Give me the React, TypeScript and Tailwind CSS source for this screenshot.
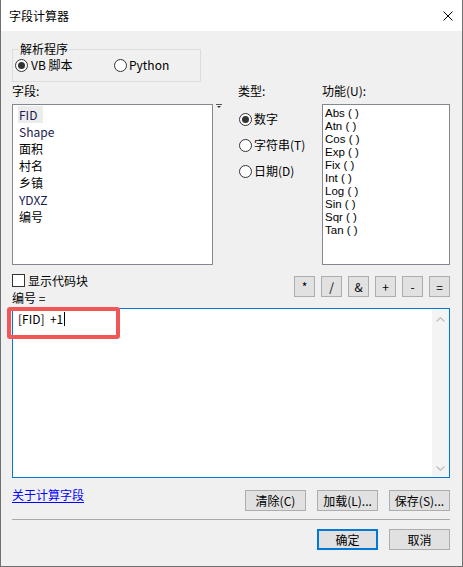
import React from "react";

function Radio({ checked }: { checked?: boolean }) {
  return (
    <span className="w-[13px] h-[13px] rounded-full border border-[#333333] bg-white flex items-center justify-center shrink-0">
      {checked && <span className="w-[7px] h-[7px] rounded-full bg-[#333333]" />}
    </span>
  );
}

function Btn({ children, primary, w = "w-[61px]" }: { children: React.ReactNode; primary?: boolean; w?: string }) {
  return (
    <div
      className={
        "h-[21px] flex items-center justify-center bg-[#e1e1e1] text-black " +
        w +
        " " +
        (primary ? "border-2 border-[#0078d7]" : "border border-[#adadad]")
      }
    >
      {children}
    </div>
  );
}

function OpBtn({ children }: { children: React.ReactNode }) {
  return (
    <div className="w-[21px] h-[21px] flex items-center justify-center bg-[#e1e1e1] border border-[#adadad] text-black">
      {children}
    </div>
  );
}

export default function App() {
  const fields = ["FID", "Shape", "面积", "村名", "乡镇", "YDXZ", "编号"];
  const funcs = ["Abs", "Atn", "Cos", "Exp", "Fix", "Int", "Log", "Sin", "Sqr", "Tan"];
  return (
    <div className="relative w-[463px] h-[567px] flex flex-col border-x border-b border-[#707070] bg-[#f0f0f0] text-[12px] leading-[16px] text-black font-['Noto_Sans_CJK_SC',sans-serif] overflow-hidden">
      {/* title bar */}
      <div className="h-[31px] shrink-0 bg-white flex items-center justify-between pl-[8px] pr-[9px]">
        <span>字段计算器</span>
        <svg width="10" height="10" viewBox="0 0 10 10" className="block">
          <path d="M0.5 0.5 L9.5 9.5 M9.5 0.5 L0.5 9.5" stroke="#000" strokeWidth="1" />
        </svg>
      </div>

      {/* body */}
      <div className="flex flex-col pl-[11px] pr-[12px]">
        {/* parser group */}
        <div className="relative mt-[18px] w-[189px] h-[33px] border border-[#dcdcdc] pl-[2px] pt-[7px]">
          <span className="absolute -top-[9px] left-[6px] px-[1px] bg-[#f0f0f0]">解析程序</span>
          <div className="flex items-center">
            <div className="w-[99px] flex items-center gap-[3px]">
              <Radio checked />
              <span>VB 脚本</span>
            </div>
            <div className="flex items-center gap-[2px]">
              <Radio />
              <span>Python</span>
            </div>
          </div>
        </div>

        {/* lists row */}
        <div className="flex mt-[1px]">
          <div className="w-[201px] flex flex-col">
            <span className="h-[16px]">字段:</span>
            <div className="mt-[5px] h-[161px] border border-[#828790] bg-white pl-[5px] pt-[1px] flex flex-col items-start">
              {fields.map((f, i) => (
                <span
                  key={f}
                  className={
                    "h-[17px] leading-[17px] px-[1px] " +
                    (i === 0 ? "bg-[#ececec] w-[25px]" : "") +
                    (/^[A-Za-z]/.test(f) ? " text-[#1a1a50]" : "")
                  }
                >
                  {f}
                </span>
              ))}
            </div>
          </div>
          <div className="ml-[3px] mt-[21px] w-[6px]">
            <svg width="6" height="5" viewBox="0 0 6 5" className="block">
              <path d="M0 0.5 H6" stroke="#555" strokeWidth="1" />
              <path d="M1 2 H5 L3 4 Z" fill="#333" />
            </svg>
          </div>
          <div className="ml-[15px] w-[85px] flex flex-col">
            <span className="h-[16px] pl-[1px]">类型:</span>
            <div className="mt-[7px] flex flex-col pl-[2px]">
              <div className="h-[26px] flex items-center gap-[2px]">
                <Radio checked />
                <span>数字</span>
              </div>
              <div className="h-[26px] flex items-center gap-[2px]">
                <Radio />
                <span>字符串(T)</span>
              </div>
              <div className="h-[26px] flex items-center gap-[2px]">
                <Radio />
                <span>日期(D)</span>
              </div>
            </div>
          </div>
          <div className="w-[128px] flex flex-col">
            <span className="h-[16px]">功能(U):</span>
            <div className="mt-[5px] h-[161px] border border-[#828790] bg-white pl-[2px] pt-[2px] flex flex-col font-['Liberation_Sans',sans-serif] text-[11.5px]">
              {funcs.map((f) => (
                <span key={f} className="h-[13px] leading-[13px] whitespace-pre">
                  {f + " ( )"}
                </span>
              ))}
            </div>
          </div>
        </div>

        {/* checkbox + operator row */}
        <div className="h-[43px] flex justify-between">
          <div className="flex flex-col">
            <div className="mt-[9px] h-[13px] flex items-center gap-[3px]">
              <span className="w-[13px] h-[13px] border border-[#333333] bg-white" />
              <span>显示代码块</span>
            </div>
            <span className="mt-[3px] h-[16px]">编号 =</span>
          </div>
          <div className="mt-[11px] flex gap-[6px]">
            <OpBtn>*</OpBtn>
            <OpBtn>/</OpBtn>
            <OpBtn>&amp;</OpBtn>
            <OpBtn>+</OpBtn>
            <OpBtn>-</OpBtn>
            <OpBtn>=</OpBtn>
          </div>
        </div>

        {/* expression box */}
        <div className="h-[170px] border border-[#0078d7] bg-white flex">
          <div className="flex-1 pl-[5px] pt-[2px]">
            <span className="inline-flex items-center whitespace-pre">
              {"[FID]  +1"}
              <span className="ml-[1px] w-px h-[14px] bg-black" />
            </span>
          </div>
          <div className="w-[17px] bg-[#f4f4f4] flex flex-col items-center justify-between pt-[8px] pb-[6px]">
            <svg width="9" height="5" viewBox="0 0 9 5" className="block">
              <path d="M0.5 4.5 L4.5 0.8 L8.5 4.5" stroke="#c2c2c2" strokeWidth="1.4" fill="none" />
            </svg>
            <svg width="9" height="5" viewBox="0 0 9 5" className="block">
              <path d="M0.5 0.5 L4.5 4.2 L8.5 0.5" stroke="#c2c2c2" strokeWidth="1.4" fill="none" />
            </svg>
          </div>
        </div>

        {/* link + action buttons */}
        <div className="flex items-start">
          <span className="mt-[9px] h-[16px] text-[#0000ff] underline underline-offset-2">关于计算字段</span>
          <div className="ml-auto mt-[12px] flex gap-[11px]">
            <Btn>清除(C)</Btn>
            <Btn>加载(L)...</Btn>
            <Btn>保存(S)...</Btn>
          </div>
        </div>

        <div className="mt-[8px] h-px bg-[#a8a8a8]" />

        <div className="mt-[9px] flex justify-end gap-[11px]">
          <Btn primary>确定</Btn>
          <Btn>取消</Btn>
        </div>
      </div>

      {/* red highlight annotation */}
      <div className="absolute left-[6px] top-[307px] w-[113px] h-[32px] border-[4px] border-[#f35656] rounded-[3px]" />
    </div>
  );
}
